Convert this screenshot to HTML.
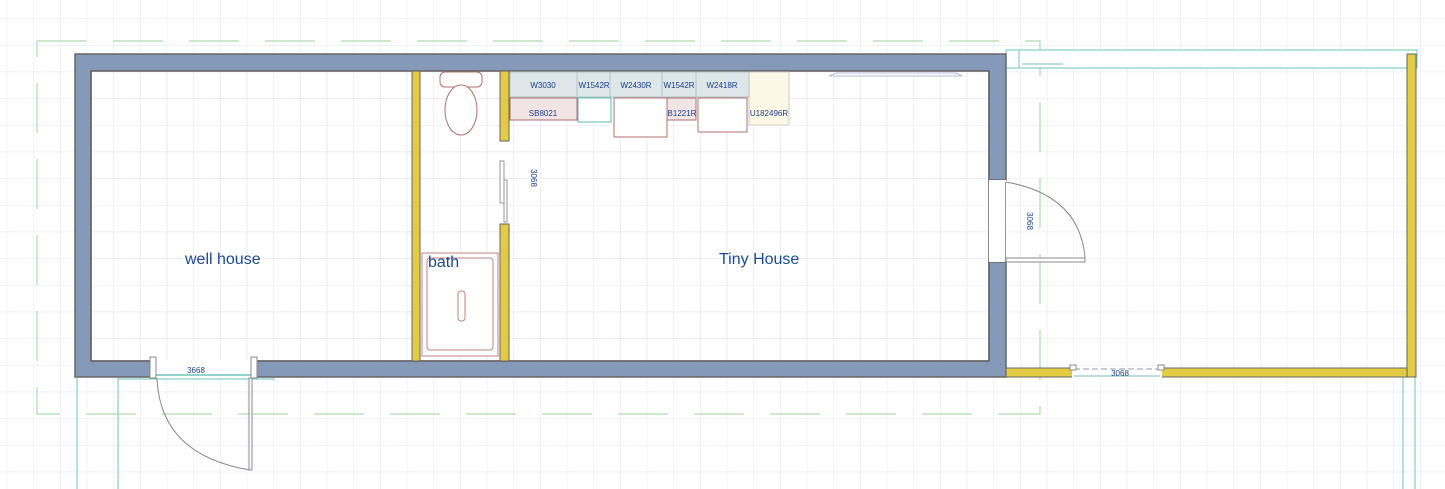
<!DOCTYPE html>
<html><head><meta charset="utf-8"><style>
html,body{margin:0;padding:0;background:#fff;}
svg{display:block;}
text{font-family:"Liberation Sans",sans-serif;}
</style></head><body>
<svg width="1445" height="489" viewBox="0 0 1445 489" xmlns="http://www.w3.org/2000/svg">
<defs>
<pattern id="g" x="6.7" y="18.3" width="26.67" height="26.67" patternUnits="userSpaceOnUse">
<path d="M0 0H26.67M0 0V26.67" stroke="#e4e4fa" stroke-width="1" fill="none"/>
</pattern>
</defs>
<rect width="1445" height="489" fill="url(#g)"/>
<!-- green dashed rect -->
<rect x="37" y="41" width="1003" height="373" fill="none" stroke="#9fd39f" stroke-width="1" stroke-dasharray="50 26"/>
<!-- porch teal top -->
<rect x="1006" y="50" width="411" height="18" fill="#fff" stroke="#6cc4bc" stroke-width="1"/>
<line x1="1019" y1="50" x2="1019" y2="68" stroke="#6cc4bc"/>
<line x1="1022" y1="64" x2="1063" y2="64" stroke="#6cc4bc"/>
<!-- teal lower lines -->
<line x1="77" y1="378" x2="77" y2="489" stroke="#6cc4bc"/>
<line x1="118" y1="378" x2="118" y2="489" stroke="#6cc4bc"/>
<line x1="118" y1="379" x2="275" y2="379" stroke="#6cc4bc"/>
<line x1="1403" y1="377" x2="1403" y2="489" stroke="#6cc4bc"/>
<line x1="1415" y1="377" x2="1415" y2="489" stroke="#6cc4bc"/>
<!-- main blue wall -->
<path d="M75 54H1006V180H989V71H91V361H989V262H1006V377H75Z" fill="#8599b8" stroke="#666" stroke-width="1.5"/>
<rect x="91" y="71" width="898" height="290" fill="url(#g)"/>
<rect x="91" y="71" width="898" height="290" fill="none" stroke="#666" stroke-width="1.5"/>
<!-- well house door gap -->
<rect x="153" y="360" width="101" height="18" fill="#fff"/>
<line x1="153" y1="375" x2="254" y2="375" stroke="#6cc4bc" stroke-width="1.5"/>
<rect x="150" y="357" width="6" height="21" fill="#fff" stroke="#888"/>
<rect x="251" y="357" width="6" height="21" fill="#fff" stroke="#888"/>
<path d="M157 378 Q160 455 250 470" fill="none" stroke="#888"/>
<rect x="249" y="378" width="3" height="92" fill="#fff" stroke="#888"/>
<text x="196" y="373" font-size="8" fill="#1a3f8a" text-anchor="middle">3668</text>
<!-- tiny house right door -->
<rect x="989" y="180" width="17" height="82" fill="#fff"/>
<rect x="1005" y="182" width="1" height="80" fill="#999"/>
<path d="M1006 182 Q1080 195 1085 258" fill="none" stroke="#888"/>
<rect x="1006" y="258" width="79" height="4" fill="#fff" stroke="#888"/>
<text x="1027" y="221" font-size="8" fill="#1a3f8a" text-anchor="middle" transform="rotate(90 1027 221)">3068</text>
<!-- partitions -->
<rect x="412" y="71" width="8" height="290" fill="#e4cb44" stroke="#666"/>
<rect x="500" y="71" width="9" height="70" fill="#e4cb44" stroke="#666"/>
<rect x="500" y="224" width="9" height="137" fill="#e4cb44" stroke="#666"/>
<rect x="500" y="161" width="4" height="42" fill="#fff" stroke="#999"/>
<rect x="504" y="180" width="3" height="42" fill="#fff" stroke="#999"/>
<text x="531" y="178" font-size="8" fill="#1a3f8a" text-anchor="middle" transform="rotate(90 531 178)">3068</text>
<!-- toilet -->
<rect x="440" y="72" width="42" height="15" rx="5" fill="#fff" stroke="#b07070"/>
<ellipse cx="461" cy="110" rx="16" ry="25" fill="#fff" stroke="#b07070"/>
<!-- cabinets lower -->
<rect x="510" y="98" width="67" height="22" fill="#f0e4e4" stroke="#b07070"/>
<text x="543" y="116" font-size="8" fill="#1a3f8a" text-anchor="middle">SB8021</text>
<rect x="578" y="98" width="33" height="24" fill="#fff" stroke="#5cbcb4"/>
<rect x="614" y="98" width="53" height="39" fill="#fff" stroke="#b07070"/>
<rect x="667" y="98" width="29" height="22" fill="#f0e4e4" stroke="#b07070"/>
<text x="682" y="116" font-size="8" fill="#1a3f8a" text-anchor="middle">B1221R</text>
<rect x="698" y="98" width="49" height="34" fill="#fff" stroke="#b07070"/>
<rect x="749" y="72" width="40" height="53" fill="#fbf8e6" stroke="#ccc"/>
<text x="769" y="116" font-size="8" fill="#1a3f8a" text-anchor="middle">U182496R</text>
<!-- wall cabinets -->
<g fill="#dde6e8" stroke="#b6c4c8">
<rect x="510" y="72" width="67" height="25"/><rect x="577" y="72" width="33" height="25"/>
<rect x="610" y="72" width="52" height="25"/><rect x="662" y="72" width="34" height="25"/>
<rect x="696" y="72" width="53" height="25"/>
</g>
<g font-size="8" fill="#1a3f8a" text-anchor="middle">
<text x="543" y="88">W3030</text><text x="594" y="88">W1542R</text><text x="636" y="88">W2430R</text><text x="679" y="88">W1542R</text><text x="722" y="88">W2418R</text>
</g>
<!-- window/top fixture -->
<path d="M829 76H962L956 73H836Z" fill="#fff" stroke="#b8b8e0"/>
<!-- tub -->
<rect x="422" y="253" width="76" height="103" fill="#fff" stroke="#c08080"/>
<rect x="427" y="258" width="66" height="92" rx="3" fill="none" stroke="#c08080"/>
<rect x="458" y="291" width="7" height="30" rx="3" fill="none" stroke="#c08080"/>
<!-- porch yellow walls -->
<rect x="1006" y="368" width="410" height="9" fill="#e4cb44" stroke="#666"/>
<rect x="1407" y="54" width="9" height="323" fill="#e4cb44" stroke="#666"/>
<rect x="1072" y="366" width="90" height="12" fill="#fff"/>
<line x1="1074" y1="369" x2="1160" y2="369" stroke="#999" stroke-dasharray="6 3"/>
<line x1="1074" y1="376" x2="1160" y2="376" stroke="#6cc4bc"/>
<rect x="1070" y="365" width="6" height="5" fill="#fff" stroke="#888"/>
<rect x="1158" y="365" width="6" height="5" fill="#fff" stroke="#888"/>
<text x="1120" y="376" font-size="8" fill="#1a3f8a" text-anchor="middle">3068</text>
<!-- labels -->
<g font-size="16" fill="#1a4b94" font-family="Liberation Sans, sans-serif">
<text x="185" y="264">well house</text>
<text x="428" y="267">bath</text>
<text x="719" y="264">Tiny House</text>
</g>
</svg>
</body></html>
